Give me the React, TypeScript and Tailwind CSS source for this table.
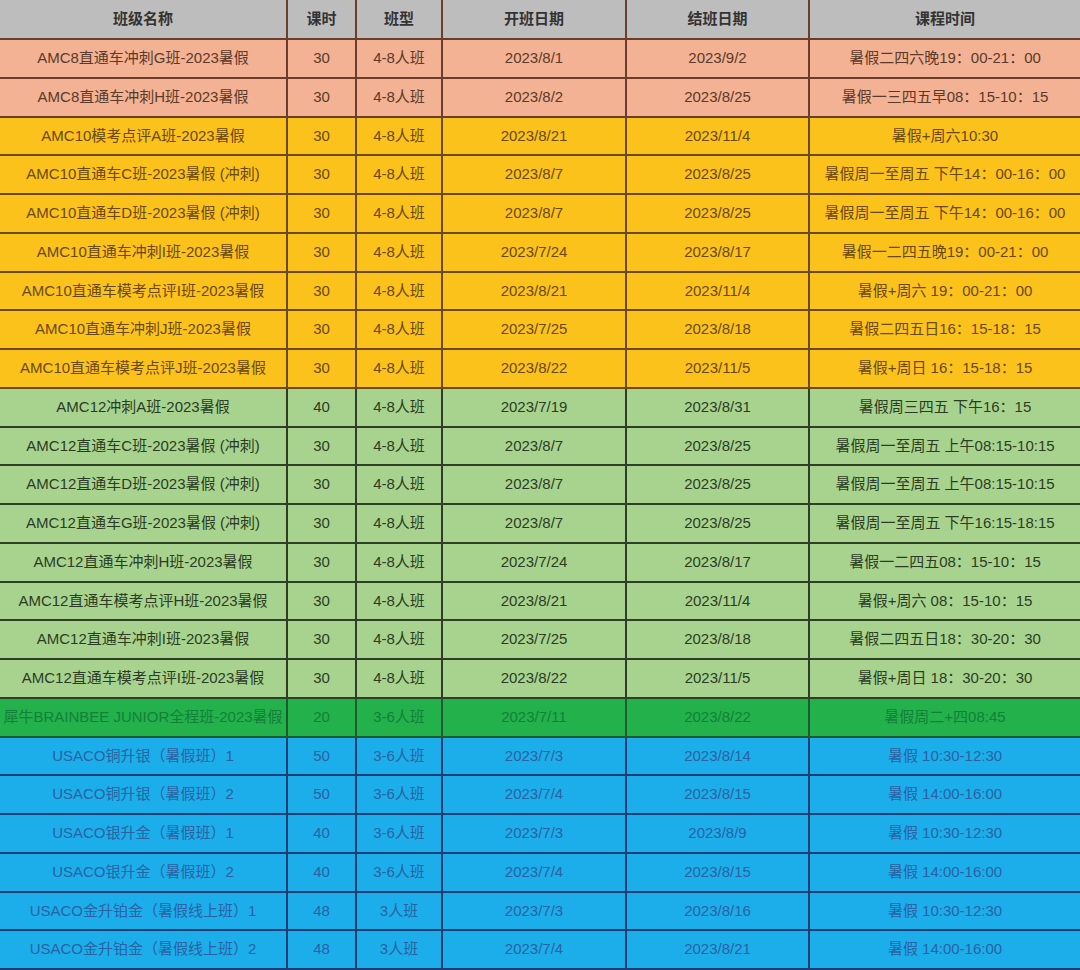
type Group = "peach" | "yellow" | "lgreen" | "green" | "blue";

const groupStyle: Record<Group, string> = {
  peach: "bg-[#f3b293] text-[#5a3a2a] border-[#6b3d2c]",
  yellow: "bg-[#fbc21c] text-[#6a4812] border-[#6b4a1a]",
  lgreen: "bg-[#a8d38f] text-[#2c3c24] border-[#2f3f26]",
  green: "bg-[#22b14b] text-[#15803a] border-[#1d5a2c]",
  blue: "bg-[#1caeea] text-[#2a62a4] border-[#1b3f72]",
};

const rows: [Group, string, string, string, string, string, string][] = [
  ["peach", "AMC8直通车冲刺G班-2023暑假", "30", "4-8人班", "2023/8/1", "2023/9/2", "暑假二四六晚19：00-21：00"],
  ["peach", "AMC8直通车冲刺H班-2023暑假", "30", "4-8人班", "2023/8/2", "2023/8/25", "暑假一三四五早08：15-10：15"],
  ["yellow", "AMC10模考点评A班-2023暑假", "30", "4-8人班", "2023/8/21", "2023/11/4", "暑假+周六10:30"],
  ["yellow", "AMC10直通车C班-2023暑假 (冲刺)", "30", "4-8人班", "2023/8/7", "2023/8/25", "暑假周一至周五 下午14：00-16：00"],
  ["yellow", "AMC10直通车D班-2023暑假 (冲刺)", "30", "4-8人班", "2023/8/7", "2023/8/25", "暑假周一至周五 下午14：00-16：00"],
  ["yellow", "AMC10直通车冲刺I班-2023暑假", "30", "4-8人班", "2023/7/24", "2023/8/17", "暑假一二四五晚19：00-21：00"],
  ["yellow", "AMC10直通车模考点评I班-2023暑假", "30", "4-8人班", "2023/8/21", "2023/11/4", "暑假+周六 19：00-21：00"],
  ["yellow", "AMC10直通车冲刺J班-2023暑假", "30", "4-8人班", "2023/7/25", "2023/8/18", "暑假二四五日16：15-18：15"],
  ["yellow", "AMC10直通车模考点评J班-2023暑假", "30", "4-8人班", "2023/8/22", "2023/11/5", "暑假+周日 16：15-18：15"],
  ["lgreen", "AMC12冲刺A班-2023暑假", "40", "4-8人班", "2023/7/19", "2023/8/31", "暑假周三四五 下午16：15"],
  ["lgreen", "AMC12直通车C班-2023暑假 (冲刺)", "30", "4-8人班", "2023/8/7", "2023/8/25", "暑假周一至周五 上午08:15-10:15"],
  ["lgreen", "AMC12直通车D班-2023暑假 (冲刺)", "30", "4-8人班", "2023/8/7", "2023/8/25", "暑假周一至周五 上午08:15-10:15"],
  ["lgreen", "AMC12直通车G班-2023暑假 (冲刺)", "30", "4-8人班", "2023/8/7", "2023/8/25", "暑假周一至周五 下午16:15-18:15"],
  ["lgreen", "AMC12直通车冲刺H班-2023暑假", "30", "4-8人班", "2023/7/24", "2023/8/17", "暑假一二四五08：15-10：15"],
  ["lgreen", "AMC12直通车模考点评H班-2023暑假", "30", "4-8人班", "2023/8/21", "2023/11/4", "暑假+周六 08：15-10：15"],
  ["lgreen", "AMC12直通车冲刺I班-2023暑假", "30", "4-8人班", "2023/7/25", "2023/8/18", "暑假二四五日18：30-20：30"],
  ["lgreen", "AMC12直通车模考点评I班-2023暑假", "30", "4-8人班", "2023/8/22", "2023/11/5", "暑假+周日 18：30-20：30"],
  ["green", "犀牛BRAINBEE JUNIOR全程班-2023暑假", "20", "3-6人班", "2023/7/11", "2023/8/22", "暑假周二+四08:45"],
  ["blue", "USACO铜升银（暑假班）1", "50", "3-6人班", "2023/7/3", "2023/8/14", "暑假 10:30-12:30"],
  ["blue", "USACO铜升银（暑假班）2", "50", "3-6人班", "2023/7/4", "2023/8/15", "暑假 14:00-16:00"],
  ["blue", "USACO银升金（暑假班）1", "40", "3-6人班", "2023/7/3", "2023/8/9", "暑假 10:30-12:30"],
  ["blue", "USACO银升金（暑假班）2", "40", "3-6人班", "2023/7/4", "2023/8/15", "暑假 14:00-16:00"],
  ["blue", "USACO金升铂金（暑假线上班）1", "48", "3人班", "2023/7/3", "2023/8/16", "暑假 10:30-12:30"],
  ["blue", "USACO金升铂金（暑假线上班）2", "48", "3人班", "2023/7/4", "2023/8/21", "暑假 14:00-16:00"],
];

const headers = ["班级名称", "课时", "班型", "开班日期", "结班日期", "课程时间"];

export default function App() {
  return (
    <div
      className="w-[1080px] h-[970px] bg-[#f3b293] overflow-hidden"
      style={{ fontFamily: '"Liberation Sans", "Noto Sans CJK SC", sans-serif' }}
    >
      <div className="grid grid-cols-[288px_69px_86px_184px_183px_270px] grid-rows-[40px_repeat(24,38.75px)]">
        {headers.map((h, i) => (
          <div
            key={h}
            className={`flex items-center justify-center bg-[#bdbdbd] text-[#333] text-[15px] font-bold border-b-2 border-[#6b3d2c] ${
              i < 5 ? "border-r-2" : ""
            }`}
          >
            {h}
          </div>
        ))}
        {rows.map((r, ri) =>
          r.slice(1).map((c, ci) => (
            <div
              key={`${ri}-${ci}`}
              className={`flex items-center justify-center text-[15px] whitespace-nowrap border-b-2 ${
                ci < 5 ? "border-r-2" : ""
              } ${groupStyle[r[0]]}`}
            >
              {c}
            </div>
          ))
        )}
      </div>
    </div>
  );
}
